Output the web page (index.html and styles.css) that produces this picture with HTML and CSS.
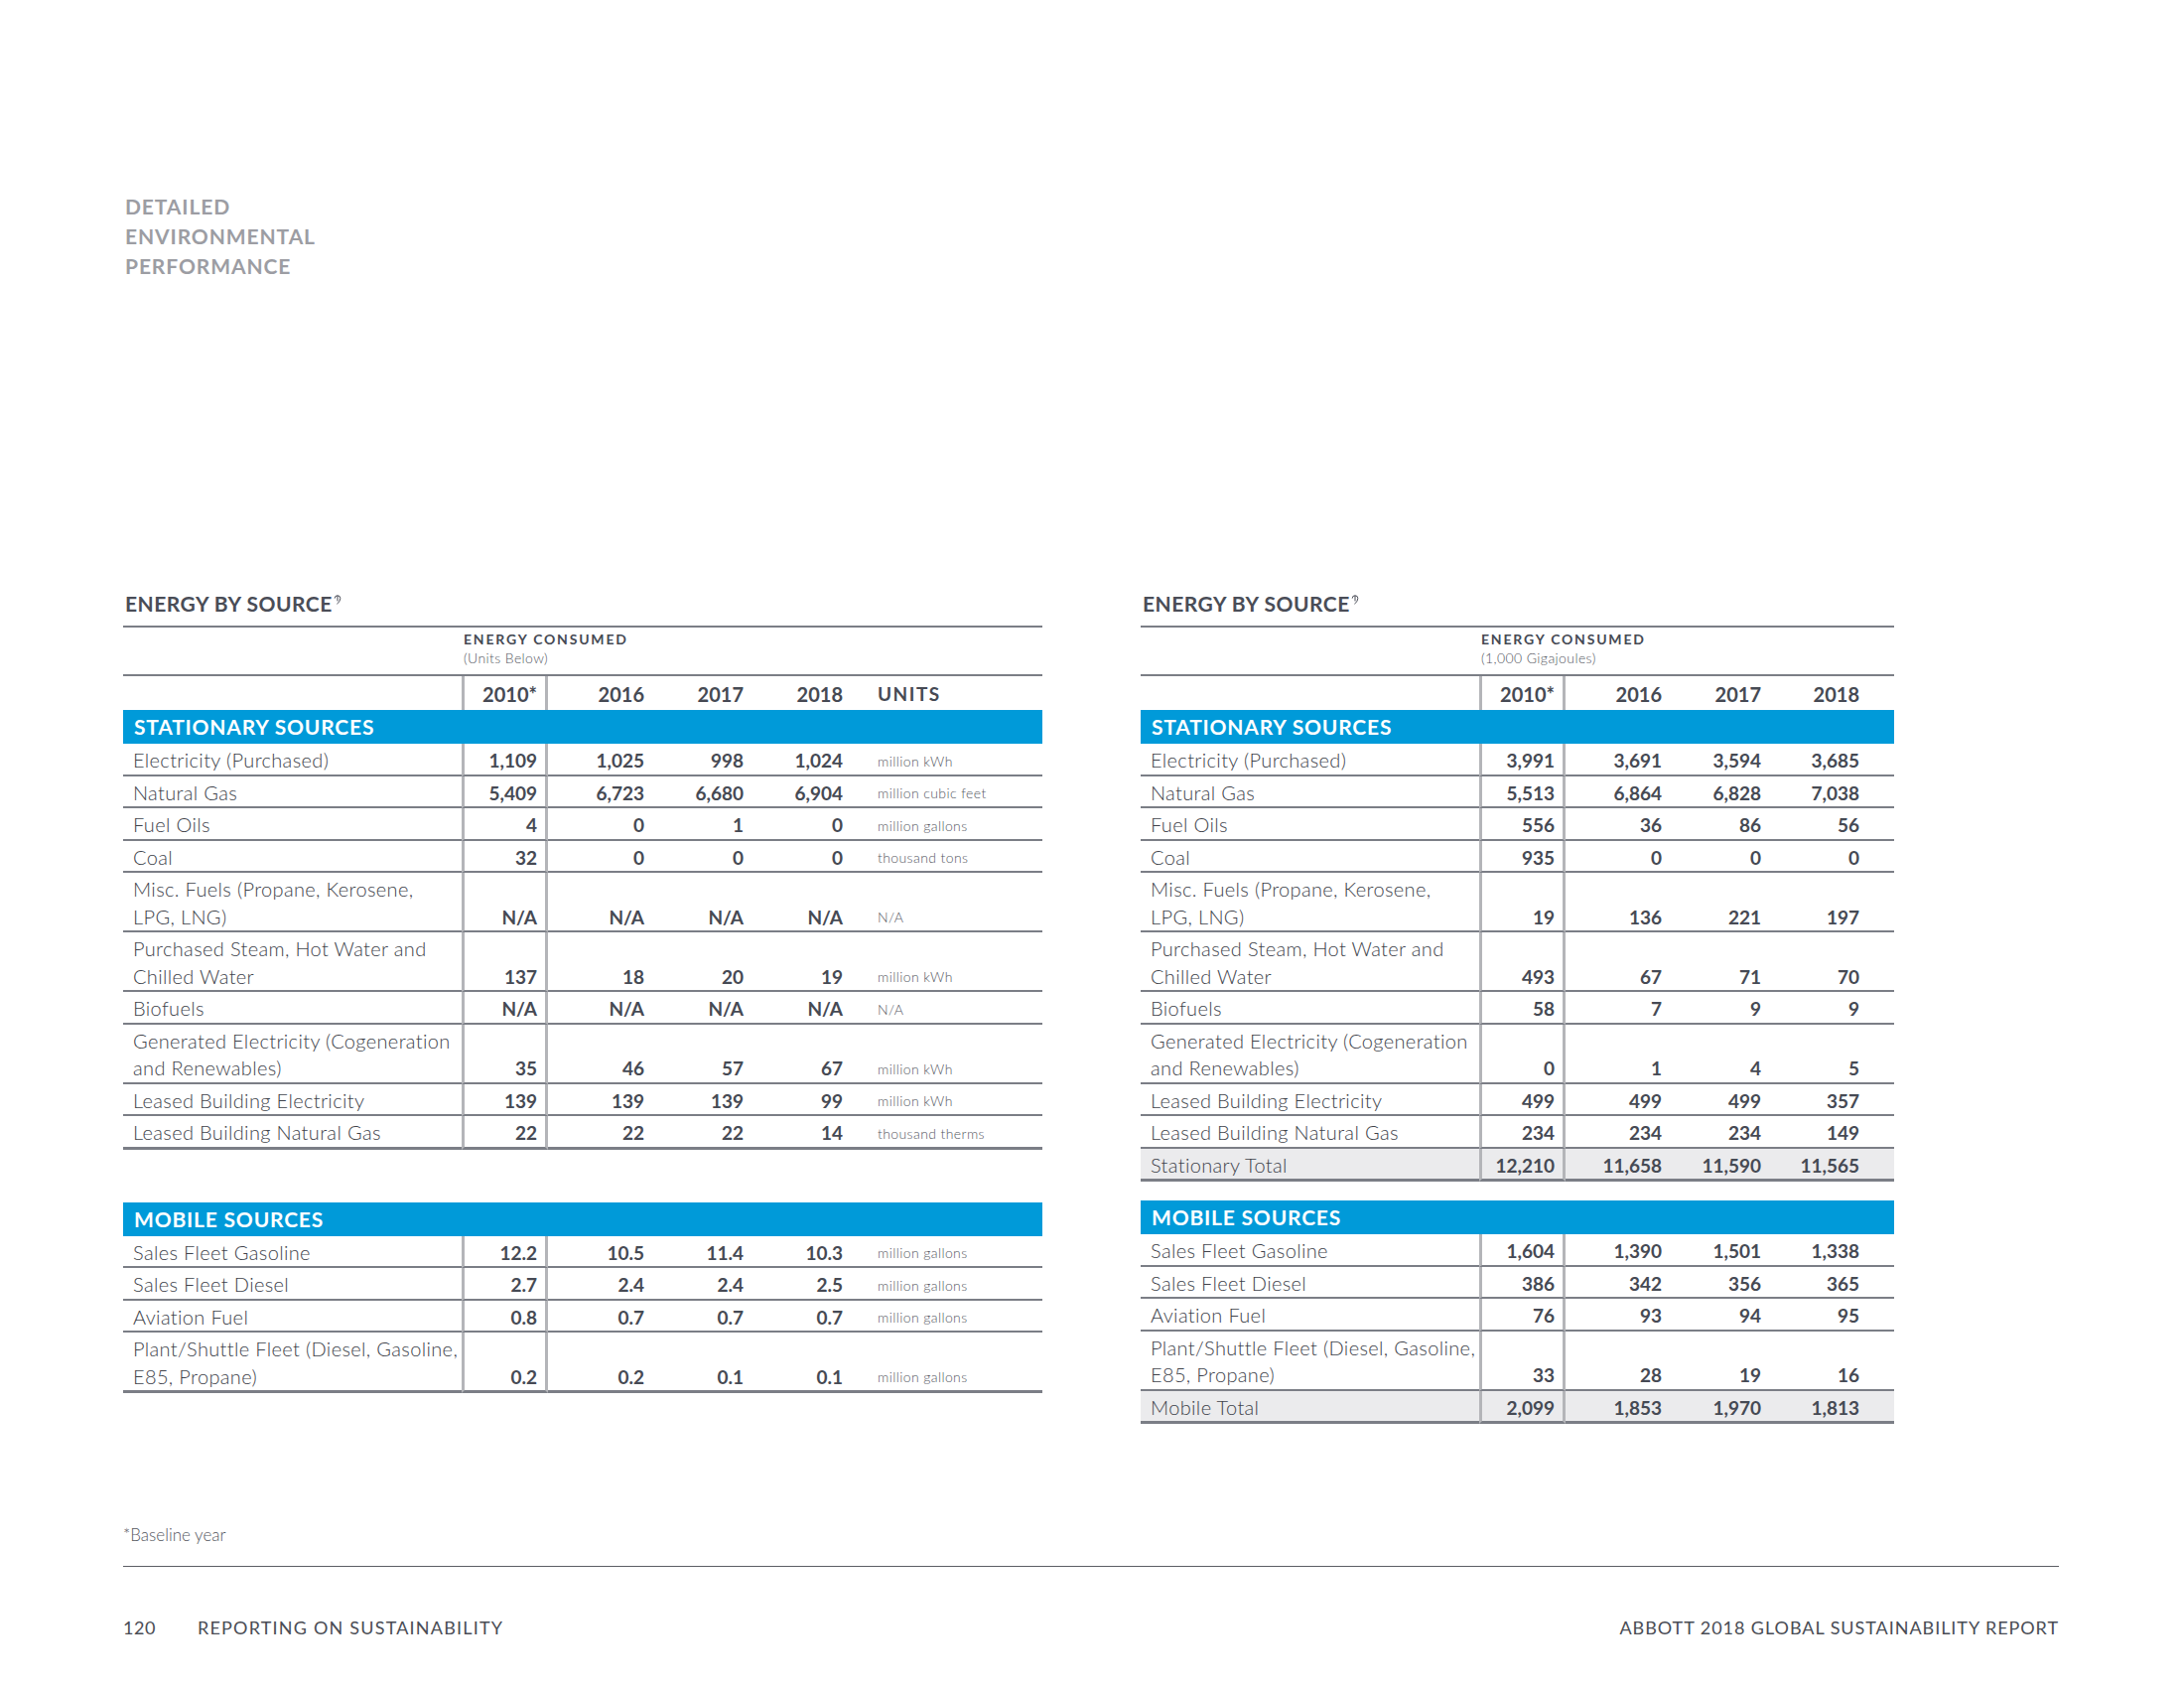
FILE: index.html
```html
<!DOCTYPE html>
<html lang="en">
<head>
<meta charset="utf-8">
<title>Detailed Environmental Performance</title>
<link rel="stylesheet" href="styles.css">
</head>
<body>
<div class="page">
  <header class="page-title">
    <div>DETAILED</div>
    <div>ENVIRONMENTAL</div>
    <div>PERFORMANCE</div>
  </header>

  <section class="panels">
    <!-- LEFT PANEL -->
    <div class="panel panel-left">
      <h2 class="panel-heading">ENERGY BY SOURCE<svg class="assured" viewBox="0 0 8 10" width="8" height="10"><path d="M1.2 3.6 A2.8 2.8 0 1 1 6.8 3.6 Q6.8 7 3.4 9.2 M4 0.8 V6.4" fill="none" stroke="#4a4d57" stroke-width="1"/></svg></h2>
      <table class="data">
        <colgroup><col class="c-label"><col class="c-base"><col class="c-y1"><col class="c-y"><col class="c-y"><col class="c-units"></colgroup>
        <tr class="row-consumed"><td></td><td colspan="5"><div class="consumed-title">ENERGY CONSUMED</div><div class="consumed-sub">(Units Below)</div></td></tr>
        <tr class="row-years"><td></td><td class="base">2010*</td><td>2016</td><td>2017</td><td>2018</td><td class="units-head">UNITS</td></tr>
        <tr class="band"><td colspan="6">STATIONARY SOURCES</td></tr>
        <tr><td class="label">Electricity (Purchased)</td><td class="base">1,109</td><td>1,025</td><td>998</td><td>1,024</td><td class="unit">million kWh</td></tr>
        <tr><td class="label">Natural Gas</td><td class="base">5,409</td><td>6,723</td><td>6,680</td><td>6,904</td><td class="unit">million cubic feet</td></tr>
        <tr><td class="label">Fuel Oils</td><td class="base">4</td><td>0</td><td>1</td><td>0</td><td class="unit">million gallons</td></tr>
        <tr><td class="label">Coal</td><td class="base">32</td><td>0</td><td>0</td><td>0</td><td class="unit">thousand tons</td></tr>
        <tr><td class="label">Misc. Fuels (Propane, Kerosene,<br>LPG, LNG)</td><td class="base">N/A</td><td>N/A</td><td>N/A</td><td>N/A</td><td class="unit">N/A</td></tr>
        <tr><td class="label">Purchased Steam, Hot Water and<br>Chilled Water</td><td class="base">137</td><td>18</td><td>20</td><td>19</td><td class="unit">million kWh</td></tr>
        <tr><td class="label">Biofuels</td><td class="base">N/A</td><td>N/A</td><td>N/A</td><td>N/A</td><td class="unit">N/A</td></tr>
        <tr><td class="label">Generated Electricity (Cogeneration<br>and Renewables)</td><td class="base">35</td><td>46</td><td>57</td><td>67</td><td class="unit">million kWh</td></tr>
        <tr><td class="label">Leased Building Electricity</td><td class="base">139</td><td>139</td><td>139</td><td>99</td><td class="unit">million kWh</td></tr>
        <tr class="last"><td class="label">Leased Building Natural Gas</td><td class="base">22</td><td>22</td><td>22</td><td>14</td><td class="unit">thousand therms</td></tr>
      </table>

      <table class="data mobile mobile-left">
        <colgroup><col class="c-label"><col class="c-base"><col class="c-y1"><col class="c-y"><col class="c-y"><col class="c-units"></colgroup>
        <tr class="band"><td colspan="6">MOBILE SOURCES</td></tr>
        <tr><td class="label">Sales Fleet Gasoline</td><td class="base">12.2</td><td>10.5</td><td>11.4</td><td>10.3</td><td class="unit">million gallons</td></tr>
        <tr><td class="label">Sales Fleet Diesel</td><td class="base">2.7</td><td>2.4</td><td>2.4</td><td>2.5</td><td class="unit">million gallons</td></tr>
        <tr><td class="label">Aviation Fuel</td><td class="base">0.8</td><td>0.7</td><td>0.7</td><td>0.7</td><td class="unit">million gallons</td></tr>
        <tr class="last"><td class="label">Plant/Shuttle Fleet (Diesel, Gasoline,<br>E85, Propane)</td><td class="base">0.2</td><td>0.2</td><td>0.1</td><td>0.1</td><td class="unit">million gallons</td></tr>
      </table>
    </div>

    <!-- RIGHT PANEL -->
    <div class="panel panel-right">
      <h2 class="panel-heading">ENERGY BY SOURCE<svg class="assured" viewBox="0 0 8 10" width="8" height="10"><path d="M1.2 3.6 A2.8 2.8 0 1 1 6.8 3.6 Q6.8 7 3.4 9.2 M4 0.8 V6.4" fill="none" stroke="#4a4d57" stroke-width="1"/></svg></h2>
      <table class="data">
        <colgroup><col class="c-label"><col class="c-base"><col class="c-y1"><col class="c-y"><col class="c-ylast"></colgroup>
        <tr class="row-consumed"><td></td><td colspan="4"><div class="consumed-title">ENERGY CONSUMED</div><div class="consumed-sub">(1,000 Gigajoules)</div></td></tr>
        <tr class="row-years"><td></td><td class="base">2010*</td><td>2016</td><td>2017</td><td class="ylast">2018</td></tr>
        <tr class="band"><td colspan="5">STATIONARY SOURCES</td></tr>
        <tr><td class="label">Electricity (Purchased)</td><td class="base">3,991</td><td>3,691</td><td>3,594</td><td class="ylast">3,685</td></tr>
        <tr><td class="label">Natural Gas</td><td class="base">5,513</td><td>6,864</td><td>6,828</td><td class="ylast">7,038</td></tr>
        <tr><td class="label">Fuel Oils</td><td class="base">556</td><td>36</td><td>86</td><td class="ylast">56</td></tr>
        <tr><td class="label">Coal</td><td class="base">935</td><td>0</td><td>0</td><td class="ylast">0</td></tr>
        <tr><td class="label">Misc. Fuels (Propane, Kerosene,<br>LPG, LNG)</td><td class="base">19</td><td>136</td><td>221</td><td class="ylast">197</td></tr>
        <tr><td class="label">Purchased Steam, Hot Water and<br>Chilled Water</td><td class="base">493</td><td>67</td><td>71</td><td class="ylast">70</td></tr>
        <tr><td class="label">Biofuels</td><td class="base">58</td><td>7</td><td>9</td><td class="ylast">9</td></tr>
        <tr><td class="label">Generated Electricity (Cogeneration<br>and Renewables)</td><td class="base">0</td><td>1</td><td>4</td><td class="ylast">5</td></tr>
        <tr><td class="label">Leased Building Electricity</td><td class="base">499</td><td>499</td><td>499</td><td class="ylast">357</td></tr>
        <tr><td class="label">Leased Building Natural Gas</td><td class="base">234</td><td>234</td><td>234</td><td class="ylast">149</td></tr>
        <tr class="total last"><td class="label">Stationary Total</td><td class="base">12,210</td><td>11,658</td><td>11,590</td><td class="ylast">11,565</td></tr>
      </table>

      <table class="data mobile mobile-right">
        <colgroup><col class="c-label"><col class="c-base"><col class="c-y1"><col class="c-y"><col class="c-ylast"></colgroup>
        <tr class="band"><td colspan="5">MOBILE SOURCES</td></tr>
        <tr><td class="label">Sales Fleet Gasoline</td><td class="base">1,604</td><td>1,390</td><td>1,501</td><td class="ylast">1,338</td></tr>
        <tr><td class="label">Sales Fleet Diesel</td><td class="base">386</td><td>342</td><td>356</td><td class="ylast">365</td></tr>
        <tr><td class="label">Aviation Fuel</td><td class="base">76</td><td>93</td><td>94</td><td class="ylast">95</td></tr>
        <tr><td class="label">Plant/Shuttle Fleet (Diesel, Gasoline,<br>E85, Propane)</td><td class="base">33</td><td>28</td><td>19</td><td class="ylast">16</td></tr>
        <tr class="total last"><td class="label">Mobile Total</td><td class="base">2,099</td><td>1,853</td><td>1,970</td><td class="ylast">1,813</td></tr>
      </table>
    </div>
  </section>

  <p class="footnote">*Baseline year</p>

  <footer class="page-footer">
    <div class="footer-left"><span class="page-num">120</span><span>REPORTING ON SUSTAINABILITY</span></div>
    <div class="footer-right">ABBOTT 2018 GLOBAL SUSTAINABILITY REPORT</div>
  </footer>
</div>
</body>
</html>
```

FILE: styles.css
```css
html, body {
  margin: 0;
  padding: 0;
  background: #ffffff;
}

body {
  font-family: "Lato", "Liberation Sans", sans-serif;
  color: #444852;
}

.page {
  width: 2200px;
  height: 1700px;
  box-sizing: border-box;
  padding: 193px 126px 0 124px;
}

/* Title */
.page-title {
  font-size: 21px;
  line-height: 30px;
  font-weight: 700;
  letter-spacing: 0.9px;
  color: #9c9da3;
  padding-left: 2px;
}

/* Panels */
.panels {
  display: flex;
  align-items: flex-start;
  gap: 99px;
  margin-top: 310px;
}

.panel-left { width: 926px; }
.panel-right { width: 759px; }

.panel-heading {
  margin: 0 0 7px 2px;
  font-size: 21px;
  line-height: 30px;
  font-weight: 700;
  letter-spacing: 0.5px;
  color: #4a4d57;
}

.assured {
  vertical-align: top;
  margin-top: 6px;
  margin-left: 1px;
}

/* Tables */
.data {
  width: 100%;
  table-layout: fixed;
  border-collapse: separate;
  border-spacing: 0;
  border-top: 2px solid #7b7e86;
}

.data.mobile { border-top: 0; }
.mobile-left { margin-top: 53px; }
.mobile-right { margin-top: 19px; }

.c-label { width: 341px; }
.c-base { width: 87px; }
.c-y1 { width: 108px; }
.c-y { width: 100px; }
.c-ylast { width: 123px; }
.c-units { width: 190px; }

.data td {
  padding: 3px 11px 0 0;
  line-height: 27.5px;
  font-size: 19px;
  font-weight: 700;
  text-align: right;
  vertical-align: bottom;
  border-bottom: 2px solid #7b7e86;
  white-space: nowrap;
  color: #464a54;
}

.data td.ylast { padding-right: 35px; }

.data td.base {
  border-left: 3px solid #b4b5b9;
  border-right: 3px solid #b4b5b9;
  padding-right: 8px;
}

.data td.label {
  text-align: left;
  padding-left: 10px;
  font-size: 20px;
  font-weight: 300;
  letter-spacing: 0.35px;
  color: #40434b;
}

.data td.unit {
  text-align: left;
  padding-left: 24px;
  font-size: 14px;
  font-weight: 300;
  letter-spacing: 0.4px;
  color: #55585f;
  line-height: 24px;
  padding-bottom: 1px;
}

.data tr.last td { border-bottom-width: 3px; }

/* Consumed header */
.row-consumed td {
  height: 43px;
  vertical-align: top;
  padding: 4px 0 0 2px;
  text-align: left;
}

.consumed-title {
  font-size: 14px;
  line-height: 16px;
  font-weight: 700;
  letter-spacing: 1.8px;
  color: #464a54;
}

.consumed-sub {
  margin-top: 3px;
  font-size: 14px;
  line-height: 16px;
  font-weight: 300;
  letter-spacing: 0.4px;
  color: #55585f;
}

/* Years row */
.row-years td {
  border-bottom: 0;
  padding-top: 2px;
  line-height: 32px;
  font-size: 20px;
}

.row-years td.units-head {
  text-align: left;
  padding-left: 24px;
  letter-spacing: 1.5px;
  font-size: 19px;
}

/* Blue band */
.band td {
  background: #009ad9;
  color: #ffffff;
  text-align: left;
  padding: 0 0 0 11px;
  height: 34px;
  line-height: 34px;
  font-size: 21px;
  font-weight: 700;
  letter-spacing: 0.8px;
  border-bottom: 0;
  vertical-align: middle;
}

/* Totals */
.total td { background: #ebebed; }

/* Footnote and footer */
.footnote {
  margin: 102px 0 0 0;
  font-size: 17px;
  line-height: 20px;
  font-weight: 300;
  color: #55585f;
}

.page-footer {
  margin-top: 21px;
  border-top: 1px solid #5c5e64;
  display: flex;
  justify-content: space-between;
  padding-top: 50px;
  font-size: 18px;
  line-height: 22px;
  font-weight: 400;
  letter-spacing: 1.2px;
  color: #4a4d55;
}

.footer-left { display: flex; }
.footer-right { letter-spacing: 0.95px; }
.page-num { width: 75px; letter-spacing: 0.5px; }
```
